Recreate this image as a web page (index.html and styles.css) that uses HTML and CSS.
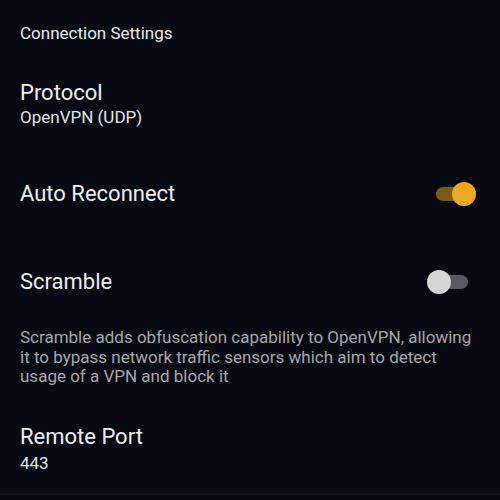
FILE: index.html
```html
<!DOCTYPE html>
<html lang="en">
<head>
  <meta charset="UTF-8" />
  <title>Connection Settings</title>
  <link rel="stylesheet" href="styles.css">
</head>
<body>
  <div class="screen">
    <div class="section-title">Connection Settings</div>

    <div class="pref pref-protocol">
      <div class="pref-title">Protocol</div>
      <div class="pref-value">OpenVPN (UDP)</div>
    </div>

    <div class="pref-row pref-reconnect">
      <div class="pref-title">Auto Reconnect</div>
      <div class="switch on"><span class="track"></span><span class="thumb"></span></div>
    </div>

    <div class="pref-row pref-scramble">
      <div class="pref-title">Scramble</div>
      <div class="switch"><span class="track"></span><span class="thumb"></span></div>
    </div>

    <p class="pref-desc">Scramble adds obfuscation capability to OpenVPN, allowing it to bypass network traffic sensors which aim to detect usage of a VPN and block it</p>

    <div class="pref pref-port">
      <div class="pref-title">Remote Port</div>
      <div class="pref-value">443</div>
    </div>
  </div>
  <div class="bottom-bar"></div>
</body>
</html>
```

FILE: styles.css
```css
html, body {
  margin: 0;
  height: 100%;
}

body {
  background: #070a13;
  font-family: Roboto, "Noto Sans", sans-serif;
  color: #ececee;
  overflow: hidden;
  position: relative;
}

.screen {
  padding: 21px 20px 0 20px;
}

.section-title {
  font-size: 17px;
  line-height: 24px;
  color: #ececee;
}

.pref-title {
  font-size: 22px;
  line-height: 26px;
  color: #efeff1;
}

.pref-value {
  font-size: 17px;
  line-height: 22px;
  color: #e4e4e6;
}

.pref-protocol {
  margin-top: 35px;
}

.pref-row {
  display: flex;
  align-items: center;
  justify-content: space-between;
  height: 48px;
}

.pref-reconnect {
  margin-top: 42px;
}

.pref-scramble {
  margin-top: 40px;
}

.pref-desc {
  margin: 22px 0 0 0;
  font-size: 17px;
  line-height: 19.5px;
  color: #a7a7ab;
}

.pref-port {
  margin-top: 37px;
}

.pref-port .pref-value {
  margin-top: 2px;
}

/* switch */
.switch {
  position: relative;
  width: 40px;
  height: 24px;
  margin-right: 4px;
}

.switch .track {
  position: absolute;
  left: 0;
  top: 5px;
  width: 32px;
  height: 14px;
  border-radius: 7px;
  background: #595a60;
}

.switch .thumb {
  position: absolute;
  left: -9px;
  top: 0;
  width: 24px;
  height: 24px;
  border-radius: 50%;
  background: #d6d6d6;
}

.switch.on .track {
  background: #7b5b15;
}

.switch.on .thumb {
  left: 16px;
  background: #efa81f;
}

.bottom-bar {
  position: absolute;
  left: 0;
  right: 0;
  top: 493px;
  height: 2px;
  background: #13131a;
}
```
